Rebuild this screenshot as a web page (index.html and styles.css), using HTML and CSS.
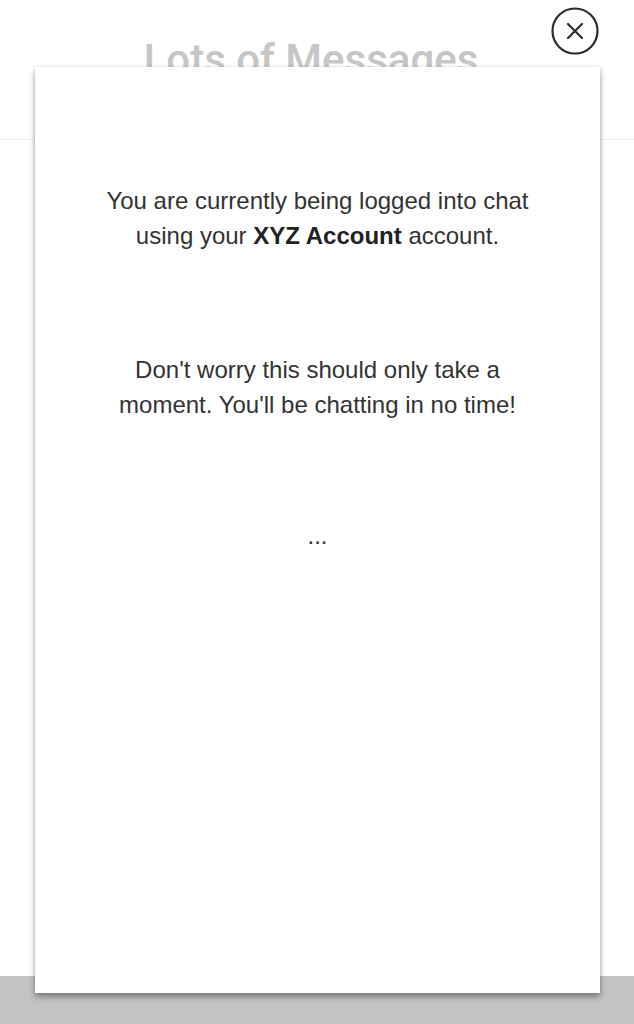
FILE: index.html
```html
<!DOCTYPE html>
<html>
<head>
<meta charset="utf-8">
<title>Lots of Messages</title>
<link rel="stylesheet" href="styles.css">
</head>
<body>
<div class="page">
  <header class="header">
    <h1 class="title">Lots of Messages</h1>
  </header>
  <main class="content"></main>
  <footer class="footer"></footer>
</div>

<div class="modal">
  <p class="msg">You are currently being logged into chat<br>using your <strong>XYZ Account</strong> account.</p>
  <p class="msg second">Don't worry this should only take a<br>moment. You'll be chatting in no time!</p>
  <p class="msg dots">...</p>
</div>

<button class="close" aria-label="Close">
  <svg width="48" height="48" viewBox="0 0 48 48">
    <circle cx="24" cy="24" r="22.5" fill="none" stroke="#2b2b2b" stroke-width="2.2"/>
    <path d="M17 17 L31 31 M31 17 L17 31" stroke="#2b2b2b" stroke-width="2.2" stroke-linecap="round"/>
  </svg>
</button>
</body>
</html>
```
FILE: styles.css
```css
html, body {
  margin: 0;
  padding: 0;
  background: #ffffff;
}
.page {
  display: flex;
  flex-direction: column;
  height: 1024px;
}
.header {
  height: 139px;
  border-bottom: 1px solid #efefef;
  display: flex;
  justify-content: center;
  align-items: flex-start;
  padding-right: 12px;
}
.title {
  margin: 37px 0 0;
  font-family: Roboto, "Liberation Sans", sans-serif;
  font-weight: 500;
  font-size: 42px;
  line-height: 46px;
  color: #c6c6c6;
}
.content {
  flex: 1;
}
.footer {
  height: 48px;
  background: #c3c3c3;
}
.modal {
  position: absolute;
  top: 67px;
  left: 35px;
  width: 565px;
  height: 926px;
  box-sizing: border-box;
  background: #ffffff;
  box-shadow: 0 4px 6px rgba(0, 0, 0, 0.35), 0 0 3px rgba(0, 0, 0, 0.12);
  padding-top: 116px;
  text-align: center;
  font-family: "Liberation Sans", Arial, sans-serif;
  font-size: 24px;
  line-height: 35px;
  color: #333333;
}
.msg {
  margin: 0;
}
.msg strong {
  font-weight: 700;
  color: #222222;
}
.second {
  margin-top: 99px;
}
.dots {
  margin-top: 96px;
}
.close {
  position: absolute;
  top: 7px;
  left: 551px;
  width: 48px;
  height: 48px;
  padding: 0;
  border: 0;
  background: transparent;
  cursor: pointer;
}
.close svg {
  display: block;
}
```
